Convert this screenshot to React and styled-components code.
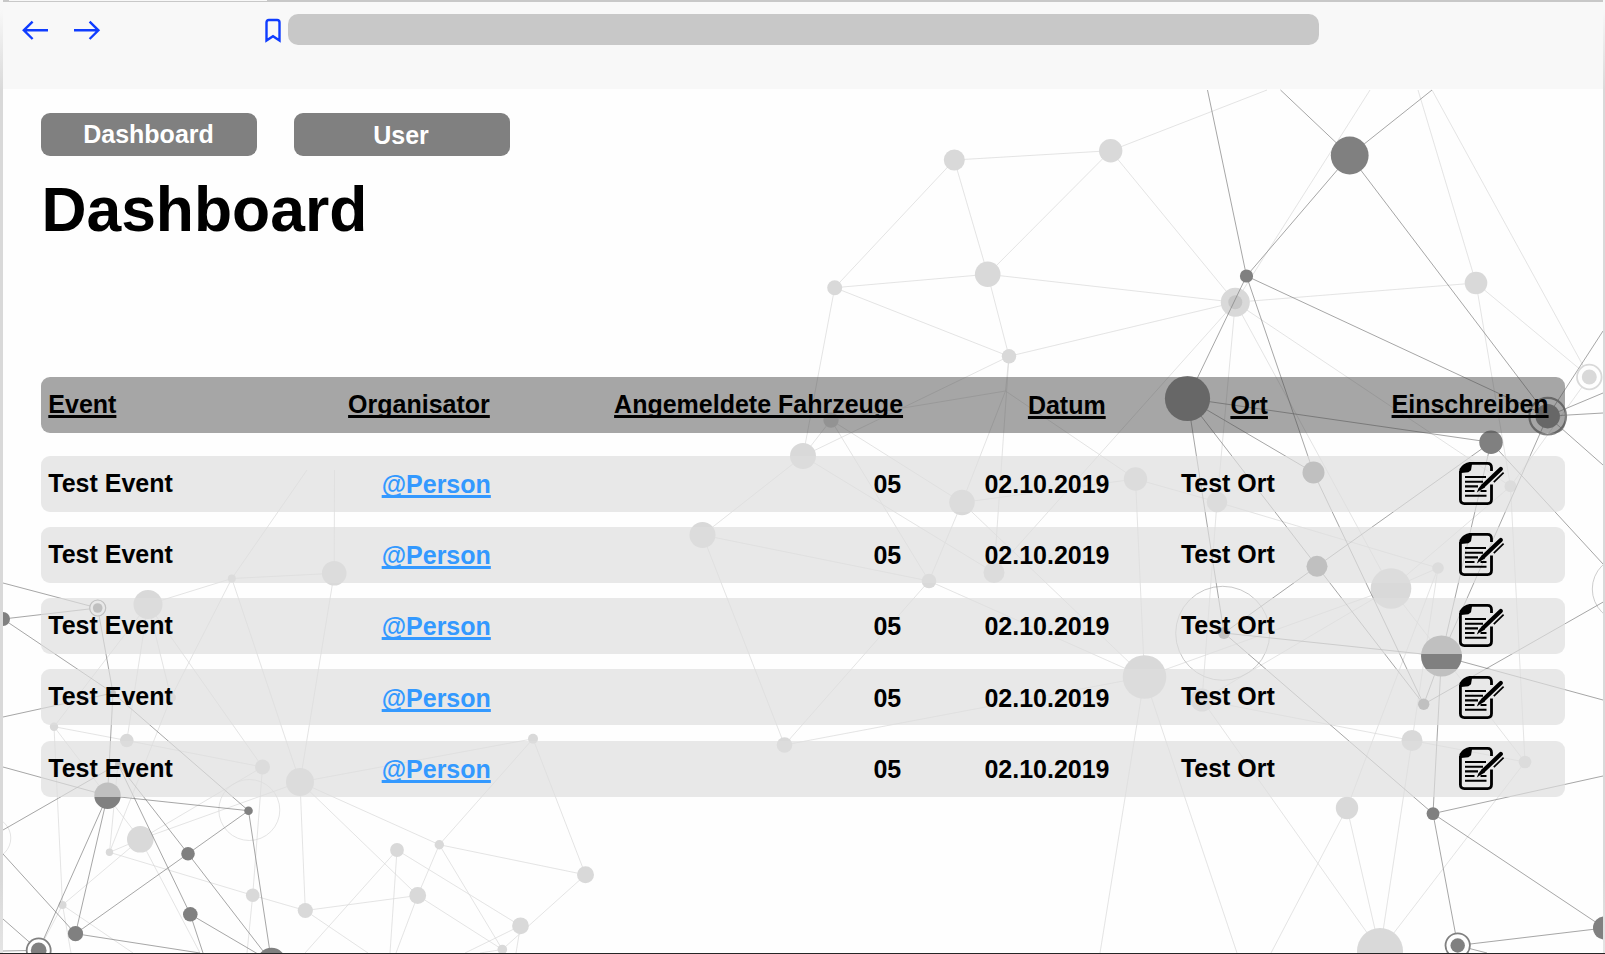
import React from "react";
import styled, { createGlobalStyle } from "styled-components";

const GlobalStyle = createGlobalStyle`
  html, body { margin: 0; padding: 0; background: #fff; }
  *, *::before, *::after { box-sizing: border-box; }
`;

const Window = styled.div`
  position: relative;
  display: flex;
  flex-direction: column;
  width: 1605px;
  height: 954px;
  overflow: hidden;
  font-family: "Liberation Sans", Arial, sans-serif;
  font-weight: 700;
  color: #000;
  background: linear-gradient(#f8f8f8 10px, #d9d9d9 90px, #d9d9d9 880px, #e4e4e4);
  padding: 0 2px 0 3px;
  border-bottom: 1px solid #262626;
`;

const TabStrip = styled.div`
  flex: none;
  height: 2px;
  padding-left: 6px;
  background: #c8c8c8;
`;

const ActiveTab = styled.div`
  width: 258px;
  height: 1px;
  background: #f8f8f8;
`;

const Toolbar = styled.header`
  flex: none;
  display: flex;
  align-items: flex-start;
  height: 87px;
  padding: 12px 0 0 18px;
  background: #f8f8f8;
  color: #0f3cff;
`;

const ToolIcon = styled.svg`
  flex: none;
  width: ${(p) => p.$w}px;
  height: 32px;
  margin-right: ${(p) => p.$gap}px;
  fill: none;
  stroke: currentColor;
  stroke-width: 2.4;
`;

const AddressBar = styled.div`
  width: 1031px;
  height: 31px;
  border-radius: 10px;
  background: #c8c8c8;
`;

const Page = styled.main`
  position: relative;
  flex: 1;
  min-height: 0;
  padding: 24px 0 0 38px;
  background: #fefefe;
`;

const Backdrop = styled.svg`
  position: absolute;
  left: 0;
  top: 0;
  width: 1600px;
  height: 864px;
`;

const Content = styled.div`
  position: relative;
`;

const Nav = styled.nav`
  display: flex;
  gap: 37px;
`;

const NavButton = styled.a`
  display: flex;
  justify-content: center;
  width: 216px;
  height: 43px;
  padding-top: ${(p) => p.$top}px;
  padding-right: ${(p) => p.$shift || 0}px;
  border-radius: 9px;
  background: #808080;
  color: #fff;
  font-size: 25px;
  line-height: 28px;
`;

const Title = styled.h1`
  margin: 19.4px 0 0 0.4px;
  height: 70px;
  font-size: 62.4px;
  line-height: 70px;
`;

const Table = styled.section`
  margin-top: 131.2px;
  width: 1524.4px;
  font-size: 25px;
  line-height: 28px;
  white-space: nowrap;
`;

const HeadRow = styled.div`
  display: grid;
  grid-template-columns: 299.8px 266px 413.8px 202.5px 161.2px 1fr;
  height: 56px;
  padding: 13.2px 0 0 7.3px;
  border-radius: 9px;
  background: rgba(77, 77, 77, 0.5);
`;

const Rows = styled.div`
  display: flex;
  flex-direction: column;
  gap: 15.25px;
  margin-top: 23px;
`;

const Row = styled.div`
  display: grid;
  grid-template-columns: 333.4px 491.7px 111px 196.5px 277.9px 1fr;
  height: 56px;
  padding: 13px 0 0 7.3px;
  border-radius: 9px;
  background: rgba(221, 221, 221, 0.685);
`;

const HeadCell = styled.span`
  padding-top: ${(p) => (p.$low ? 1 : 0)}px;
  text-decoration: underline;
  text-decoration-thickness: 2.6px;
  text-decoration-skip-ink: none;
`;

const Cell = styled.span`
  padding-top: ${(p) => (p.$low ? 1.4 : 0)}px;
`;

const PersonLink = styled(Cell)`
  color: #3399ff;
  text-decoration: underline;
  text-decoration-thickness: 2.6px;
  text-decoration-skip-ink: none;
`;

const SignIcon = styled.svg`
  width: 46px;
  height: 44px;
  margin-top: -6.6px;
`;

const LIGHT = "#d9d9d9";
const DARK = "#808080";

// [x, y, radius] of every node in page coordinates
const lightNodes = {
  A: [954.3, 160, 10.5], B: [1110.7, 150.7, 11.7], C: [834.7, 287.7, 7.5],
  D: [987.7, 274.3, 12.8], E: [1009, 356.3, 7.2], F: [1235.3, 302.3, 14.5],
  L: [1476, 283, 11.3], M: [1589.3, 377, 7.5], T: [1510.5, 486.3, 6],
  U: [1135.5, 479, 11.7], V: [1217, 502, 10.3], X: [1391, 588.5, 20.3],
  Y: [1438, 568, 5.8], AF: [994, 572.5, 10.5], AG: [831, 420, 7.7],
  G: [803, 456, 13], AH: [962, 502.5, 12.8], AI: [929, 581, 7.3],
  AJ: [702.5, 535, 13], AK: [784.5, 745, 7.8], AL: [1144.5, 677, 21.8],
  AM: [1202, 700, 11.5], AN: [1525, 762, 6.3], AO: [1412, 740.5, 10.5],
  AP: [1347, 808, 11.2], AQ: [1380, 951, 23], J: [1005.5, 391, 0],
  c: [148, 604.5, 14.5], d: [231.8, 578.5, 4], e: [334.2, 573.3, 12.3],
  f: [54, 726.7, 4.2], g: [126.8, 740.5, 6.8], h: [171, 697.5, 5],
  m: [262.5, 767, 7.5], n: [300, 782, 14], o: [140.3, 839.3, 13.3],
  p: [109.5, 852.3, 3.7], s: [252.7, 895.3, 6.8], t: [305.3, 910.5, 7.6],
  u: [62.5, 905, 4], aa: [397, 850, 6.9], ab: [439.3, 844.7, 4.7],
  ac: [417.7, 895.5, 8.4], ad: [585.5, 874.8, 8.5], ae: [520.5, 925.8, 8.4],
  af: [502.3, 949.5, 4.8], ag: [533, 738.8, 5],
};

const darkNodes = {
  H: [1246.5, 276, 6.6], K: [1349.7, 155.5, 18.9], P: [1187.5, 398.5, 22.6],
  N: [1547.7, 416.2, 12.2], Q: [1491, 442.3, 11.7], S: [1313.5, 472.5, 11],
  W: [1317, 566.3, 10.5], Z: [1441.5, 656, 20.5], AA: [1224, 633, 6],
  AB: [1423.7, 704.3, 5.7], AC: [1433, 813.6, 6.4], AD: [1604.5, 928, 11.5],
  AE: [1457.7, 945.5, 7.2], a: [3, 619, 7], b: [97.7, 608, 4.8],
  i: [113, 693, 3], j: [118, 764, 3], k: [107.5, 795.7, 13.2],
  l: [248.5, 810.7, 4.3], q: [188, 853.7, 6.8], r: [190.3, 914.3, 7.3],
  v: [75.5, 933.7, 7.6], w: [38.7, 950.3, 7.8], x: [271.5, 962, 14.3],
};

const lightLinks =
  "A-B A-C A-D B-D C-D C-E D-E B-F D-F E-F B-1267,90 C-G E-G E-J E-AF 1370,90-F 1418,90-L 1432,90-M " +
  "F-L L-M L-T F-T F-X F-V F-AF J-AG J-AH J-U AG-G AG-AH AG-AI G-AF G-AJ AJ-AI AJ-AK AH-AI AH-U AH-AL " +
  "AI-AL AI-AK AK-AL U-AL U-V V-Y V-AM AL-X AM-X X-Y X-T X-AN T-M T-AN Y-AO Y-AP AM-AO AO-AN AO-AQ AP-AQ " +
  "AP-1271,953 AM-AQ AN-AQ AL-1237,953 AL-1100,953 307,470-d 334.5,470-e e-d d-c d-h d-n e-n c-f c-g c-h c-m " +
  "f-g g-m f-o f-u h-p j-p o-p o-n o-m o-u p-s s-t s-m s-247,953 n-t n-ab n-ac n-ag t-ac t-368,953 o-200,953 " +
  "u-133,953 u-71,953 u-w aa-305,953 aa-390,953 aa-ae ab-ag ab-ad ab-ac ab-af ac-396,953 ac-af ad-af ag-ad " +
  "ae-465,953 ae-516,953 af-480,953";

const darkLinks =
  "1207.5,90-H 1280.5,90-K K-1432,90 K-H K-N H-N H-S H-P 1603,331-N P-S P-Q P-W P-AA S-AB W-AB Z-AB " +
  "AB-1605,601 Q-W W-AA Q-1603,564 Q-Z N-Z N-1603,393 N-1603,413 N-1603,465 AA-Z AA-AC Z-AC Z-1603,700 " +
  "AC-1603,776 AC-AD AC-AE AE-AD AE-1487,953 3,583-b a-b a-i i-l b-i i-k 3,717-i 3,767-k k-l l-q q-v k-v k-w " +
  "j-q j-r q-x r-x l-x 3,830-j 3,854-v 3,919-w 3,951-w v-200,953 r-203,953";

const nodes = { ...lightNodes, ...darkNodes };
const point = (key) => (key.includes(",") ? key.split(",").map(Number) : nodes[key]);
const linkPath = (links) =>
  links
    .split(" ")
    .map((link) => {
      const [from, to] = link.split("-").map(point);
      return `M${from[0]} ${from[1]}L${to[0]} ${to[1]}`;
    })
    .join("");

const Network = () => (
  <Backdrop viewBox="3 89 1600 864" aria-hidden="true">
    <g fill="none" strokeWidth="0.7">
      <path d={linkPath(lightLinks)} stroke={LIGHT} />
      <circle cx="1222.7" cy="633.3" r="47" stroke="#b0b0b0" />
      <circle cx="1625" cy="589" r="32.7" stroke="#b8b8b8" />
      <circle cx="249.3" cy="810" r="30.5" stroke={LIGHT} />
      <circle cx="-10" cy="838" r="20.8" stroke={LIGHT} />
    </g>
    <g fill={LIGHT}>
      {Object.entries(lightNodes).map(([key, [x, y, r]]) => (
        <circle key={key} cx={x} cy={y} r={r} />
      ))}
    </g>
    <circle cx="1235.3" cy="302.3" r="7" fill="#c6c6c6" />
    <path d={linkPath(darkLinks)} stroke={DARK} strokeWidth="0.7" fill="none" />
    <g fill="#fefefe">
      <circle cx="1589.3" cy="377" r="12.3" stroke={LIGHT} strokeWidth="1.8" />
      <circle cx="1547.7" cy="416.2" r="18.3" fill="none" stroke={DARK} strokeWidth="2.2" />
      <circle cx="1457.7" cy="945.5" r="12.2" stroke={DARK} strokeWidth="1.8" />
      <circle cx="97.7" cy="608" r="8" stroke={DARK} strokeWidth="1.2" />
      <circle cx="38.7" cy="950.3" r="12" stroke={DARK} strokeWidth="1.8" />
    </g>
    <circle cx="1589.3" cy="377" r="7.5" fill={LIGHT} />
    <g fill={DARK}>
      {Object.entries(darkNodes).map(([key, [x, y, r]]) => (
        <circle key={key} cx={x} cy={y} r={r} />
      ))}
    </g>
  </Backdrop>
);

const SignUp = () => (
  <SignIcon viewBox="0 0 46 44" role="img" aria-label="Einschreiben">
    <g fill="none" stroke="#000">
      <path
        d="M32.5 9V5.4Q32.5 1.4 28.5 1.4H11L1.4 10V37.6Q1.4 41.6 5.4 41.6H28.5Q32.5 41.6 32.5 37.6V22.5"
        strokeWidth="2.8"
      />
      <path d="M6 15H27M6 19.7H24M6 24.4H19M6 29H15.5M21.5 29H27.5M6 33.8H27.5" strokeWidth="2.1" />
      <path d="M41.8 7L24.5 23.6" strokeWidth="4.2" strokeLinecap="round" />
      <path d="M44.6 10.6L34.8 20.2" strokeWidth="1.7" />
    </g>
    <path d="M0.5 12V7Q4 1 11 0H13.4L12 8.2L9.4 10.2L2 11Z" />
    <path d="M22.8 22.2L26 25.4L20.8 28.6L17.8 30.4L19.4 26.4Z" />
  </SignIcon>
);

const events = Array.from({ length: 5 }, (_, id) => ({
  id,
  name: "Test Event",
  organiser: "@Person",
  vehicles: "05",
  date: "02.10.2019",
  place: "Test Ort",
}));

export default function App() {
  return (
    <Window>
      <GlobalStyle />
      <TabStrip>
        <ActiveTab />
      </TabStrip>
      <Toolbar>
        <ToolIcon $w={28} $gap={24} viewBox="0 0 28 32">
          <path d="M27 16.3H2.6M11.6 7.6L2.8 16.3L11.6 25" />
        </ToolIcon>
        <ToolIcon $w={28} $gap={163} viewBox="0 0 28 32">
          <path d="M1 16.3H25.6M16.6 7.6L25.4 16.3L16.6 25" />
        </ToolIcon>
        <ToolIcon $w={18} $gap={6} viewBox="0 0 18 32">
          <path d="M2.5 26.6V8.4Q2.5 6 4.9 6H13.1Q15.5 6 15.5 8.4V26.6L9 22.2Z" />
        </ToolIcon>
        <AddressBar />
      </Toolbar>
      <Page>
        <Network />
        <Content>
          <Nav>
            <NavButton $top={7} $shift={1}>Dashboard</NavButton>
            <NavButton $top={8} $shift={2}>User</NavButton>
          </Nav>
          <Title>Dashboard</Title>
          <Table>
            <HeadRow>
              <HeadCell>Event</HeadCell>
              <HeadCell>Organisator</HeadCell>
              <HeadCell>Angemeldete Fahrzeuge</HeadCell>
              <HeadCell $low>Datum</HeadCell>
              <HeadCell $low>Ort</HeadCell>
              <HeadCell>Einschreiben</HeadCell>
            </HeadRow>
            <Rows>
              {events.map((event) => (
                <Row key={event.id}>
                  <Cell>{event.name}</Cell>
                  <PersonLink $low>{event.organiser}</PersonLink>
                  <Cell $low>{event.vehicles}</Cell>
                  <Cell $low>{event.date}</Cell>
                  <Cell>{event.place}</Cell>
                  <SignUp />
                </Row>
              ))}
            </Rows>
          </Table>
        </Content>
      </Page>
    </Window>
  );
}
